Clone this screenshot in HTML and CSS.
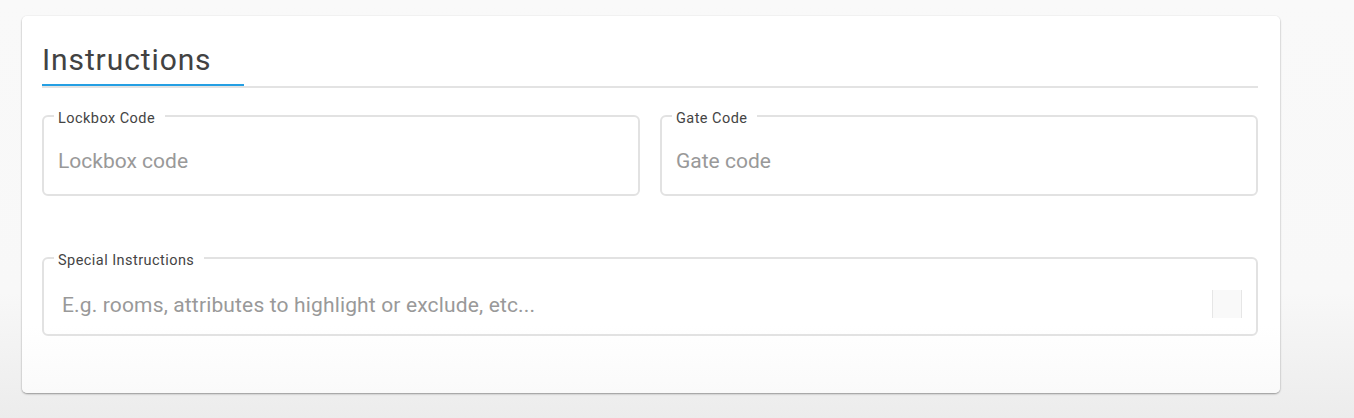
FILE: index.html
```html
<!DOCTYPE html>
<html lang="en">
<head>
<meta charset="utf-8">
<title>Instructions</title>
<link rel="stylesheet" href="styles.css">
</head>
<body>
<div class="page">
  <section class="card">
    <div class="tabs">
      <div class="tab">Instructions</div>
    </div>
    <div class="row">
      <fieldset class="field">
        <legend>Lockbox Code</legend>
        <input class="input" type="text" placeholder="Lockbox code">
      </fieldset>
      <fieldset class="field">
        <legend>Gate Code</legend>
        <input class="input" type="text" placeholder="Gate code">
      </fieldset>
    </div>
    <fieldset class="field field-wide">
      <legend>Special Instructions</legend>
      <div class="area-row">
        <textarea class="area" rows="1" placeholder="E.g. rooms, attributes to highlight or exclude, etc..."></textarea>
        <div class="scroll-box"></div>
      </div>
    </fieldset>
  </section>
</div>
</body>
</html>
```

FILE: styles.css
```css
html, body {
  margin: 0;
  padding: 0;
}
body {
  height: 418px;
  background: linear-gradient(to bottom, #f9f9f9 0%, #f8f8f8 70%, #ececec 100%);
  font-family: Roboto, "Liberation Sans", sans-serif;
  overflow: hidden;
}
.page {
  padding: 16px 74px 0 22px;
}
.card {
  background: linear-gradient(to bottom, #ffffff 0%, #ffffff 82%, #fafafa 100%);
  border-radius: 5px;
  box-shadow: 0 1px 2px rgba(0, 0, 0, 0.38), 0 0 2px rgba(0, 0, 0, 0.05);
  padding: 26px 22px 57px 20px;
}
.tabs {
  display: flex;
  border-bottom: 2px solid #e3e3e3;
}
.tab {
  width: 202px;
  font-size: 30px;
  line-height: 36px;
  color: #424242;
  padding-bottom: 6px;
  border-bottom: 2px solid #259fe3;
  letter-spacing: 0.9px;
}
.row {
  display: flex;
  gap: 20px;
  margin-top: 17px;
}
.field {
  flex: 1;
  min-width: 0;
  margin: 0;
  border: 2px solid #e2e2e2;
  border-radius: 6px;
  padding: 0 10px 21px 10px;
}
.field legend {
  font-size: 14.5px;
  line-height: 16px;
  color: #444;
  padding: 6px 10px 0 4px;
  letter-spacing: 0.45px;
}
.input {
  display: block;
  width: 100%;
  box-sizing: border-box;
  margin-top: 22px;
  border: 0;
  outline: none;
  background: transparent;
  font-family: Roboto, "Liberation Sans", sans-serif;
  font-size: 21px;
  line-height: 24px;
  height: 24px;
  padding: 0 4px;
  color: #333;
}
.input::placeholder,
.area::placeholder {
  color: #999;
}
.field-wide {
  margin-top: 51px;
  padding-bottom: 15px;
}
.area-row {
  display: flex;
  align-items: flex-start;
  margin-top: 15px;
  padding-right: 4px;
}
.area {
  flex: 1;
  min-width: 0;
  height: 28px;
  margin: 7px 0 0 0;
  border: 0;
  outline: none;
  resize: none;
  overflow: hidden;
  background: transparent;
  font-family: Roboto, "Liberation Sans", sans-serif;
  font-size: 21px;
  line-height: 28px;
  letter-spacing: 0.15px;
  padding: 0 8px;
  color: #333;
}
.scroll-box {
  width: 28px;
  height: 28px;
  margin-top: 6px;
  background: #f9f9f9;
  border-left: 1px solid #e6e6e6;
  border-right: 1px solid #e6e6e6;
}
```
